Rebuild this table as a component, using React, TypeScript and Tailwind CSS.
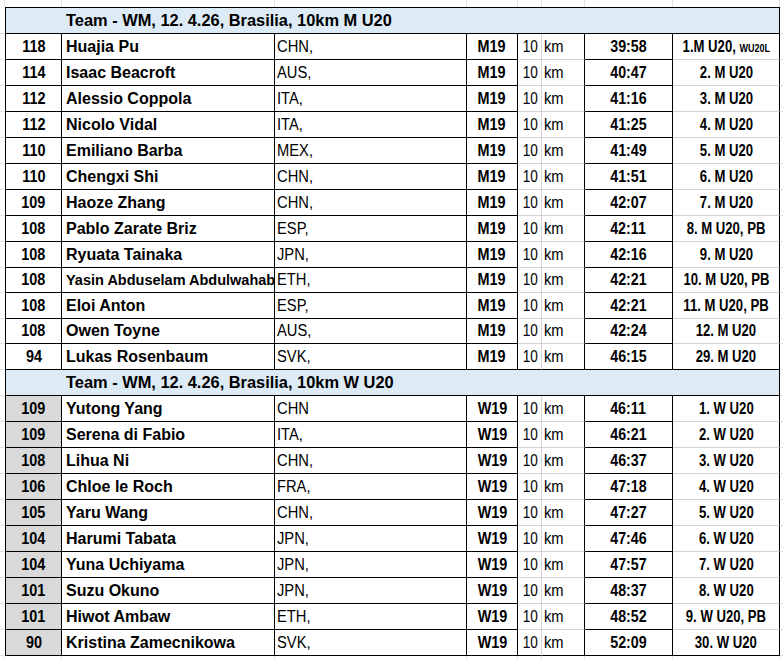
import React from "react";

type Entry = {
  pts: number;
  name: string;
  nat: string;
  cat: string;
  time: string;
  place: string;
  note?: string;
  small?: boolean;
};

const MEN: Entry[] = [
  { pts: 118, name: "Huajia Pu", nat: "CHN,", cat: "M19", time: "39:58", place: "1.M U20, ", note: "WU20L" },
  { pts: 114, name: "Isaac Beacroft", nat: "AUS,", cat: "M19", time: "40:47", place: "2. M U20" },
  { pts: 112, name: "Alessio Coppola", nat: "ITA,", cat: "M19", time: "41:16", place: "3. M U20" },
  { pts: 112, name: "Nicolo Vidal", nat: "ITA,", cat: "M19", time: "41:25", place: "4. M U20" },
  { pts: 110, name: "Emiliano Barba", nat: "MEX,", cat: "M19", time: "41:49", place: "5. M U20" },
  { pts: 110, name: "Chengxi Shi", nat: "CHN,", cat: "M19", time: "41:51", place: "6. M U20" },
  { pts: 109, name: "Haoze Zhang", nat: "CHN,", cat: "M19", time: "42:07", place: "7. M U20" },
  { pts: 108, name: "Pablo Zarate Briz", nat: "ESP,", cat: "M19", time: "42:11", place: "8. M U20, PB" },
  { pts: 108, name: "Ryuata Tainaka", nat: "JPN,", cat: "M19", time: "42:16", place: "9. M U20" },
  { pts: 108, name: "Yasin Abduselam Abdulwahab", nat: "ETH,", cat: "M19", time: "42:21", place: "10. M U20, PB", small: true },
  { pts: 108, name: "Eloi Anton", nat: "ESP,", cat: "M19", time: "42:21", place: "11. M U20, PB" },
  { pts: 108, name: "Owen Toyne", nat: "AUS,", cat: "M19", time: "42:24", place: "12. M U20" },
  { pts: 94, name: "Lukas Rosenbaum", nat: "SVK,", cat: "M19", time: "46:15", place: "29. M U20" },
];

const WOMEN: Entry[] = [
  { pts: 109, name: "Yutong Yang", nat: "CHN", cat: "W19", time: "46:11", place: "1. W U20" },
  { pts: 109, name: "Serena di Fabio", nat: "ITA,", cat: "W19", time: "46:21", place: "2. W U20" },
  { pts: 108, name: "Lihua Ni", nat: "CHN,", cat: "W19", time: "46:37", place: "3. W U20" },
  { pts: 106, name: "Chloe le Roch", nat: "FRA,", cat: "W19", time: "47:18", place: "4. W U20" },
  { pts: 105, name: "Yaru Wang", nat: "CHN,", cat: "W19", time: "47:27", place: "5. W U20" },
  { pts: 104, name: "Harumi Tabata", nat: "JPN,", cat: "W19", time: "47:46", place: "6. W U20" },
  { pts: 104, name: "Yuna Uchiyama", nat: "JPN,", cat: "W19", time: "47:57", place: "7. W U20" },
  { pts: 101, name: "Suzu Okuno", nat: "JPN,", cat: "W19", time: "48:37", place: "8. W U20" },
  { pts: 101, name: "Hiwot Ambaw", nat: "ETH,", cat: "W19", time: "48:52", place: "9. W U20, PB" },
  { pts: 90, name: "Kristina Zamecnikowa", nat: "SVK,", cat: "W19", time: "52:09", place: "30. W U20" },
];

// rows 10 and 12 of the men's block are a pixel shorter in the sheet
const SHORT_ROWS = [9, 11];

function Header({ title, first }: { title: string; first?: boolean }) {
  return (
    <div className="flex">
      <div className="w-[5px] border-b border-[#e1e1e1]" />
      <div
        className={`w-[775px] flex items-center pl-[60px] bg-[#ddebf7] border-l border-r border-b border-black font-bold text-[16.4px] text-black whitespace-nowrap ${
          first ? "h-[27px] border-t" : "h-[26px]"
        }`}
      >
        {title}
      </div>
      <div className="flex-1 border-b border-[#e1e1e1]" />
    </div>
  );
}

function Row({ e, last, women, short }: { e: Entry; last: boolean; women?: boolean; short?: boolean }) {
  const soft = last ? "border-b-black" : "border-b-[#d4d4d4]";
  return (
    <div className={`flex ${short ? "h-[25px]" : "h-[26px]"}`}>
      <div className="w-[5px] border-b border-[#e1e1e1]" />
      {/* points */}
      <div
        className={`w-[57px] flex items-center justify-center border-l border-r border-b border-black font-bold ${
          women ? "bg-[#d9d9d9]" : "bg-white"
        }`}
      >
        <span className="inline-block scale-x-[0.9]">{e.pts}</span>
      </div>
      {/* name */}
      <div className="w-[213px] flex items-center pl-[4px] border-r border-b border-black overflow-hidden whitespace-nowrap font-bold">
        <span className={e.small ? "text-[14.5px]" : ""}>{e.name}</span>
      </div>
      {/* nation */}
      <div className="w-[192px] flex items-center pl-[2px] border-r border-b border-black whitespace-nowrap">
        <span className="inline-block origin-left scale-x-[0.92]">{e.nat}</span>
      </div>
      {/* category */}
      <div className="w-[51px] flex items-center justify-center border-r border-b border-black font-bold">
        <span className="inline-block scale-x-[0.9]">{e.cat}</span>
      </div>
      {/* distance */}
      <div className={`w-[24px] flex items-center justify-end pr-[3px] border-r border-r-[#d4d4d4] border-b ${soft}`}>
        <span className="inline-block origin-right scale-x-[0.85]">10</span>
      </div>
      <div className={`w-[43px] flex items-center pl-[2px] border-r border-r-black border-b ${soft}`}>
        <span className="inline-block origin-left scale-x-[0.92]">km</span>
      </div>
      {/* time */}
      <div className="w-[88px] flex items-center justify-center border-r border-b border-black font-bold">
        <span className="inline-block scale-x-[0.89]">{e.time}</span>
      </div>
      {/* place */}
      <div className={`w-[107px] flex items-center justify-center border-r border-r-black border-b ${soft} font-bold whitespace-nowrap`}>
        <span className="inline-block scale-x-[0.82]">
          {e.place}
          {e.note && <span className="text-[11px]">{e.note}</span>}
        </span>
      </div>
      <div className="flex-1 border-b border-[#e1e1e1]" />
    </div>
  );
}

function GridStrip({ h }: { h: string }) {
  const widths = ["w-[5px]", "w-[57px]", "w-[213px]", "w-[192px]", "w-[51px]", "w-[24px]", "w-[43px]", "w-[88px]", "w-[107px]"];
  return (
    <div className={`flex ${h}`}>
      {widths.map((w, i) => (
        <div key={i} className={`${w} border-r border-[#e1e1e1]`} />
      ))}
      <div className="flex-1" />
    </div>
  );
}

export default function App() {
  return (
    <div className="w-[783px] h-[659px] overflow-hidden bg-white text-black text-[16px] leading-none font-['Liberation_Sans',Arial,sans-serif]">
      <GridStrip h="h-[7px]" />
      <Header title="Team - WM, 12. 4.26, Brasilia, 10km M U20" first />
      {MEN.map((e, i) => (
        <Row key={i} e={e} last={i === MEN.length - 1} short={SHORT_ROWS.includes(i)} />
      ))}
      <Header title="Team - WM, 12. 4.26, Brasilia, 10km W U20" />
      {WOMEN.map((e, i) => (
        <Row key={i} e={e} last={i === WOMEN.length - 1} women />
      ))}
      <GridStrip h="h-[3px]" />
    </div>
  );
}
